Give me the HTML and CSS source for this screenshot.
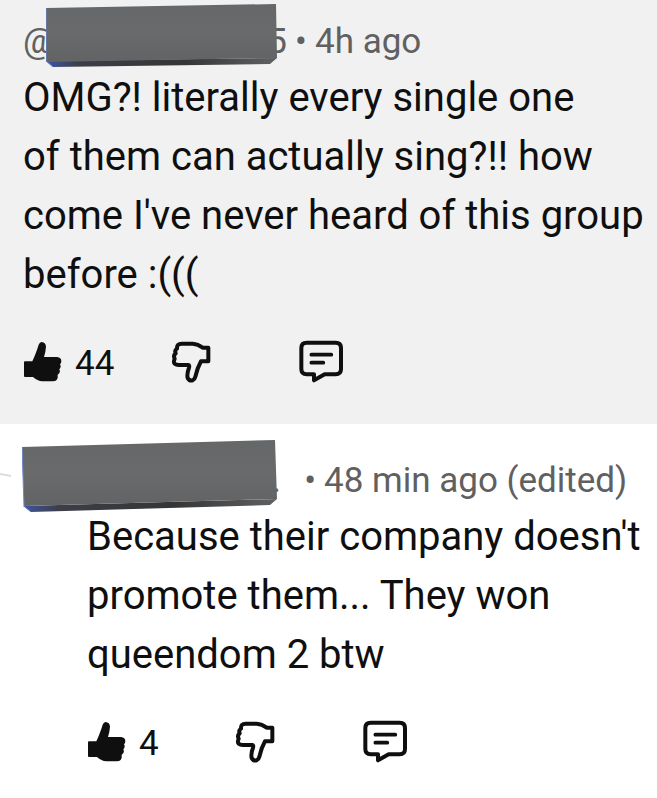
FILE: index.html
```html
<!DOCTYPE html>
<html lang="en">
<head>
  <meta charset="UTF-8" />
  <meta name="viewport" content="width=device-width, initial-scale=1.0" />
  <title>Comments</title>
  <link rel="stylesheet" href="styles.css">
</head>
<body>
  <!-- shared shapes -->
  <svg class="defs" width="0" height="0" aria-hidden="true">
    <defs>
      <linearGradient id="face" x1="0" y1="0" x2="0" y2="1">
        <stop offset="0" stop-color="#656769" />
        <stop offset="0.5" stop-color="#696a6c" />
        <stop offset="1" stop-color="#626365" />
      </linearGradient>
      <linearGradient id="edge" x1="0" y1="0" x2="1" y2="0">
        <stop offset="0" stop-color="#3f56a0" />
        <stop offset="0.14" stop-color="#3c3e48" />
        <stop offset="0.6" stop-color="#363637" />
        <stop offset="1" stop-color="#606162" />
      </linearGradient>
      <symbol id="like" viewBox="38 30 120 123">
        <path d="M44 91H66C73 76 80 58 85 41Q88 33 94 33Q106 34 107 47Q106 62 101 78H140Q153 79 153 91Q153 97 149 100Q154 108 147 115Q152 125 142 131Q145 150 126 151H96Q81 150 68 138H44Q41 138 41 135V94Q41 91 44 91Z" fill="#0f0f0f" />
      </symbol>
      <symbol id="dislike" viewBox="30 27 126 129">
        <path d="M145 50H128Q114 39 98 38H65Q50 38 51 53Q43 58 47 67Q39 73 44 83Q36 102 57 102H85Q89 103 87 110Q80 128 83 141Q88 151 98 148Q104 145 106 137Q112 111 123 91H145Z" fill="none" stroke="#0f0f0f" stroke-width="12" stroke-linejoin="round" />
      </symbol>
      <symbol id="reply" viewBox="25 30 138 129">
        <path d="M51 38H138Q154 38 154 54V117Q154 133 138 133H105L73 151V133H51Q35 133 35 117V54Q35 38 51 38Z" fill="none" stroke="#0f0f0f" stroke-width="12" stroke-linejoin="round" />
        <path d="M65 74H125M65 98H101" fill="none" stroke="#0f0f0f" stroke-width="11" stroke-linecap="round" />
      </symbol>
    </defs>
  </svg>

  <main>
    <article class="comment">
      <header class="meta">
        <a class="author" href="#">
          <span>@</span><span>5</span>
          <svg class="cover" width="232" height="64" viewBox="0 0 232 64" aria-hidden="true">
            <path d="M0 57L231 54L224 60L7 63Z" fill="url(#edge)" />
            <path d="M0 4L230 0L231 54L0 58Z" fill="url(#face)" />
            <path d="M0 4V57L7 63" fill="none" stroke="#6d86cf" />
          </svg>
        </a>
        <span class="dot">•</span>
        <time>4h ago</time>
      </header>
      <p class="text">OMG?! literally every single one<br>of them can actually sing?!! how come I've never heard of this group before :(((</p>
      <div class="actions">
        <button class="like" aria-label="Like"><svg width="40" height="41"><use href="#like" /></svg><span>44</span></button>
        <button aria-label="Dislike"><svg width="42" height="43"><use href="#dislike" /></svg></button>
        <button aria-label="Reply"><svg width="46" height="43"><use href="#reply" /></svg></button>
      </div>
    </article>

    <article class="comment nested">
      <svg class="thread" width="12" height="5" viewBox="0 0 12 5" aria-hidden="true">
        <path d="M0 1L11 3" stroke="#dcdcdc" stroke-width="2" />
      </svg>
      <header class="meta">
        <a class="author" href="#" aria-label="Author">
          <span></span><span>.</span>
          <svg class="cover" width="256" height="73" viewBox="0 0 256 73" aria-hidden="true">
            <path d="M1 66L255 59L248 65L9 72Z" fill="url(#edge)" />
            <path d="M0 7L253 0L255 59L2 66Z" fill="url(#face)" />
            <path d="M0 7L2 66L9 72" fill="none" stroke="#6d86cf" />
          </svg>
        </a>
        <span class="dot">•</span>
        <time>48 min ago (edited)</time>
      </header>
      <p class="text">Because their company doesn't promote them... They won queendom 2 btw</p>
      <div class="actions">
        <button class="like" aria-label="Like"><svg width="40" height="41"><use href="#like" /></svg><span>4</span></button>
        <button aria-label="Dislike"><svg width="42" height="43"><use href="#dislike" /></svg></button>
        <button aria-label="Reply"><svg width="46" height="43"><use href="#reply" /></svg></button>
      </div>
    </article>
  </main>
</body>
</html>
```
FILE: styles.css
```css
* { margin: 0; padding: 0; box-sizing: border-box; }
body {
  font-family: Roboto, sans-serif;
  background-color: #fff;
  color: #0f0f0f;
}
.defs { position: absolute; }
.comment {
  position: relative;
  padding: 20px 8px 42px 23px;
  background-color: #f1f1f1;
}
.meta {
  display: flex;
  white-space: nowrap;
  font-size: 35px;
  line-height: 44px;
  color: #606060;
  margin-bottom: 4px;
}
.author {
  position: relative;
  display: flex;
  justify-content: space-between;
  width: 264px;
  color: inherit;
  text-decoration: none;
}
.cover {
  position: absolute;
  left: 23px;
  top: -16px;
}
.dot {
  width: 28px;
  text-align: center;
}
.text {
  font-size: 40px;
  line-height: 59px;
}
.actions {
  display: grid;
  grid-template-columns: 147px 128px 46px;
  align-items: center;
  height: 43px;
  margin-top: 35px;
}
.actions button {
  display: flex;
  align-items: center;
  background: none;
  border: none;
  font: inherit;
  color: inherit;
  cursor: pointer;
}
.like { gap: 12px; }
.actions .like { font-size: 35px; }
.like span { padding-top: 4px; }

.nested {
  background-color: #fff;
  padding: 35px 8px 36px 87px;
}
.nested .meta { margin-left: -64px; }
.nested .author { width: 258px; }
.nested .cover {
  left: -1px;
  top: -19px;
}
.nested .dot { width: 43px; text-align: right; padding-right: 8px; }
.thread {
  position: absolute;
  left: 0;
  top: 49px;
}
```
